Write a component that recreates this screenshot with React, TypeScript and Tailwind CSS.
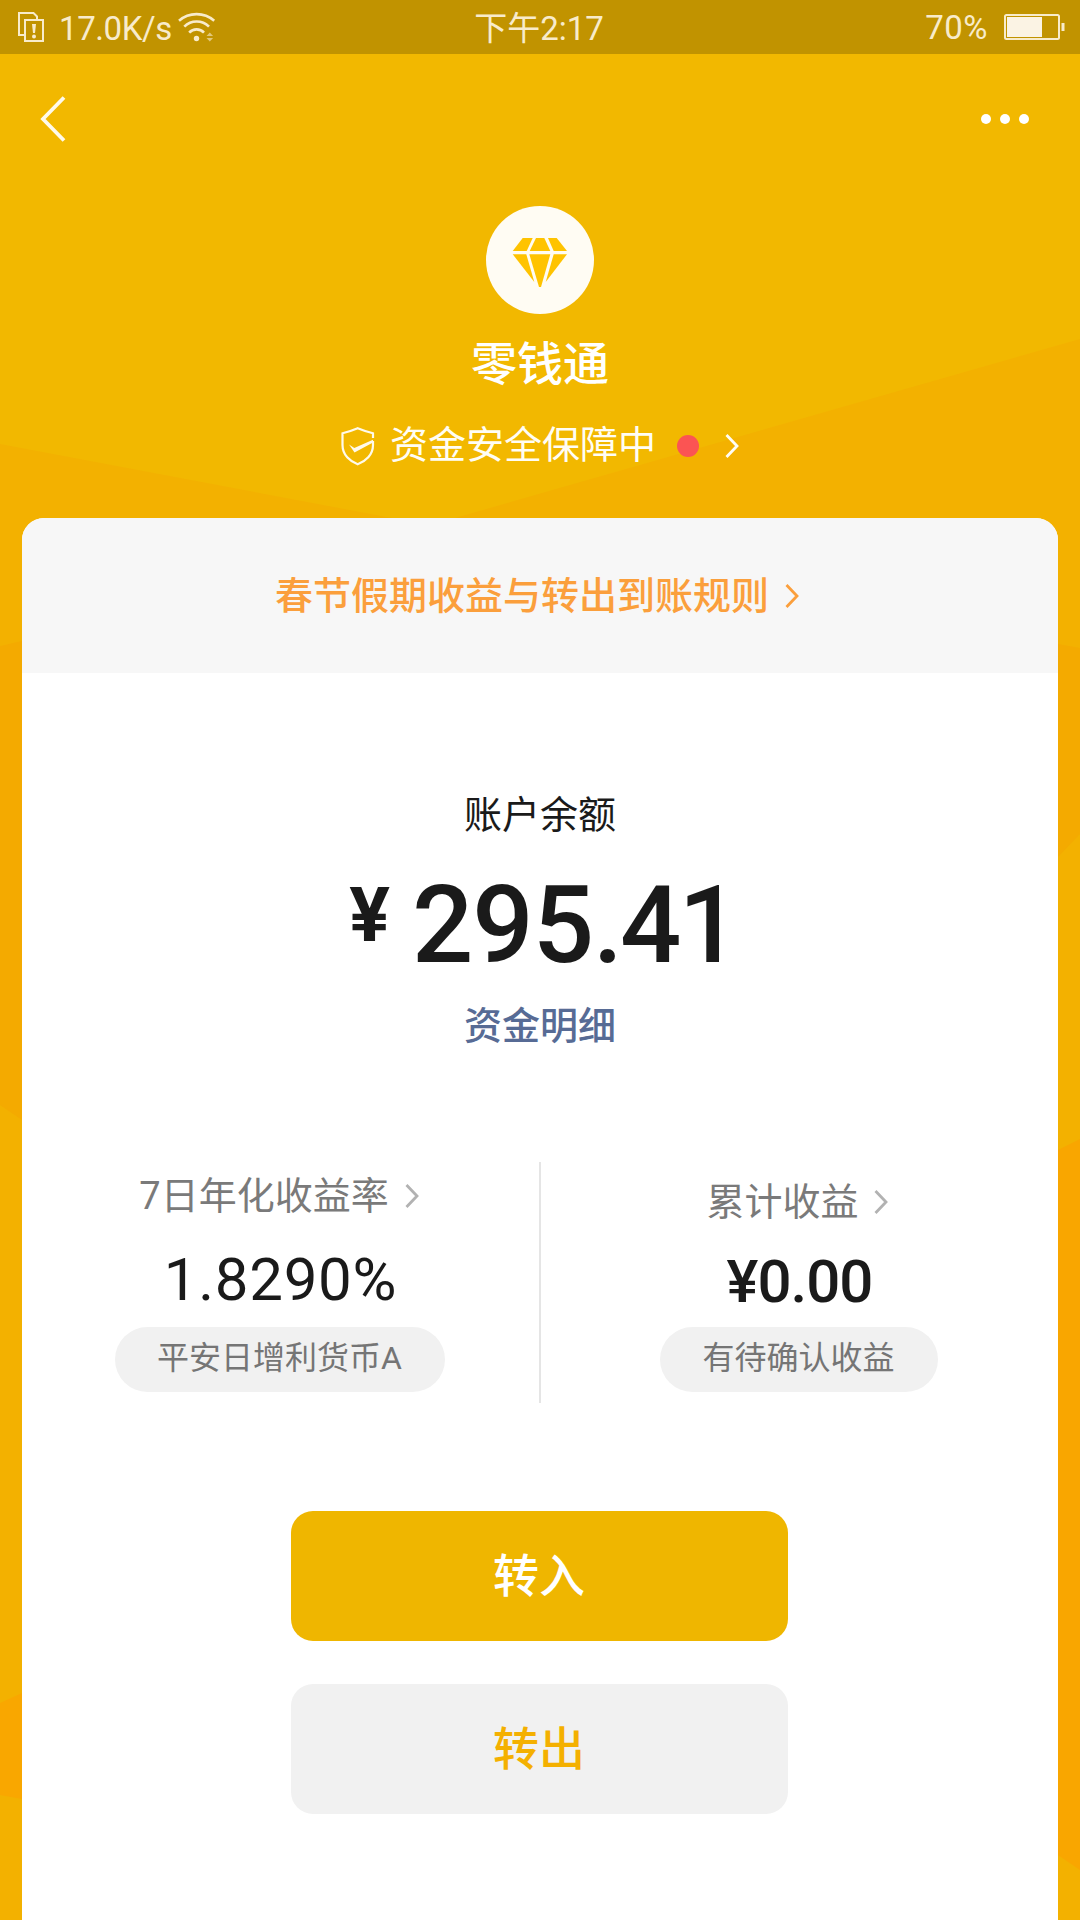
import clsx from "clsx"

/** Thin right-pointing arrow that follows every tappable label. */
function Chevron({ className }: { className?: string }) {
  return (
    <svg viewBox="0 0 14 24" fill="none" className={clsx("h-6 w-3.5 shrink-0", className)}>
      <path d="M1.5 1L12 12L1.5 23" stroke="currentColor" strokeWidth="2.8" />
    </svg>
  )
}

/** Low-contrast facets behind the card. */
function Backdrop() {
  return (
    <svg viewBox="0 0 1080 1920" className="absolute inset-0 h-full w-full">
      <rect width="1080" height="1920" fill="#f2b800" />
      <path d="M0 444L392 518H455L1080 339V1920H0Z" fill="#f3b100" />
      <path d="M0 646L22 641V1120L0 1105Z" fill="#f4aa00" />
      <path d="M0 1703L22 1693V1799L0 1795Z" fill="#f9a700" />
      <path d="M1058 644L1080 648V834L1058 857Z" fill="#f4aa00" />
      <path d="M1058 1150L1080 1139V1870L1058 1855Z" fill="#f9a600" />
    </svg>
  )
}

function StatusBar() {
  return (
    <div className="relative flex h-[54px] items-center bg-[#c19300] text-[33px] leading-[54px] text-[#f8ebcb]">
      <svg viewBox="0 0 27 31" fill="none" className="ml-[18px] h-[31px] w-[27px]">
        <path d="M6 23H1V1H15.5L19 4.5V8" stroke="currentColor" strokeWidth="2" />
        <rect x="7" y="8" width="18" height="21" stroke="currentColor" strokeWidth="2" />
        <path d="M14 12H18L17 21H15Z" fill="currentColor" />
        <circle cx="16" cy="24.5" r="2" fill="currentColor" />
      </svg>
      <span className="ml-3.5 w-[117px] pt-[3px] tracking-[-0.4px]">17.0K/s</span>
      <svg viewBox="0 0 40 34" fill="none" className="h-[34px] w-10">
        <g stroke="currentColor" strokeWidth="2.6">
          <path d="M3 10.8A26.6 26.6 0 0 1 38.2 10.8" />
          <path d="M8.3 16.6A17.5 17.5 0 0 1 33 16.6" />
          <path d="M13.2 22.6A10 10 0 0 1 28 22.6" />
        </g>
        <circle cx="20.5" cy="28.5" r="2.7" fill="currentColor" />
        <path d="M30.5 26L33.8 22.5L37.1 26ZM30.5 28L33.8 31.5L37.1 28Z" fill="currentColor" opacity="0.6" />
      </svg>
      <div className="absolute inset-x-0 top-0.5 pr-0.5 text-center">下午2:17</div>
      <span className="ml-auto mr-4 pt-px tracking-[0.5px]">70%</span>
      <svg viewBox="0 0 61 26" fill="none" className="mr-[15px] h-[26px] w-[61px]">
        <rect x="1" y="1" width="54" height="24" rx="1.5" stroke="currentColor" strokeWidth="2" />
        <rect x="3" y="3" width="35" height="20" fill="#fbf3e4" />
        <path d="M57.5 9H60.5V17H57.5Z" fill="currentColor" />
      </svg>
    </div>
  )
}

function NavBar() {
  return (
    <nav className="flex h-[130px] items-center justify-between pl-10 pr-[51px] text-white">
      <svg viewBox="0 0 26 46" fill="none" className="h-[46px] w-[26px]">
        <path d="M24 1.5L3 23L24 44.5" stroke="#fffaeb" strokeWidth="3.8" />
      </svg>
      <div className="flex gap-[9px]">
        <i className="size-2.5 rounded-full bg-white" />
        <i className="size-2.5 rounded-full bg-white" />
        <i className="size-2.5 rounded-full bg-white" />
      </div>
    </nav>
  )
}

function DiamondLogo() {
  return (
    <svg viewBox="0 0 108 108" className="mt-[22px] size-[108px]">
      <circle cx="54" cy="54" r="54" fill="#fffcf3" />
      <g fill="#ffc300">
        <path d="M36.7 32H46.7L40.7 45H26.7Z" />
        <path d="M50 32H58.3L64.3 45H43.7Z" />
        <path d="M62 32H70.7L81 45H67.7Z" />
        <path d="M26.7 48.3H40.3L48.3 76Z" />
        <path d="M43.3 48.3H64.3L55 81H53Z" />
        <path d="M67.7 48.3H81L59.7 76Z" />
      </g>
    </svg>
  )
}

function ShieldIcon() {
  return (
    <svg viewBox="0 0 34 39" fill="none" className="mt-0.5 h-[39px] w-[34px]">
      <path
        d="M32 11V6.3C26.5 5 21.5 3.3 16.7 1.3C12 3.3 7 5 1.5 6.3V18C1.5 28 9 34.5 16.7 37.3C24.5 34.5 32 28 32 18V14"
        stroke="#fffaeb"
        strokeWidth="2.2"
      />
      <path d="M8 17.5L13.3 21L32 12.8V15.6L13.5 25.5Z" fill="#fffaeb" />
    </svg>
  )
}

type StatProps = {
  label: string
  value: string
  tag: string
  className?: string
  labelClass?: string
  valueClass?: string
  tagClass?: string
}

function Stat({ label, value, tag, className, labelClass, valueClass, tagClass }: StatProps) {
  return (
    <div className={clsx("flex flex-1 flex-col items-center pb-[11px]", className)}>
      <div className={clsx("flex h-[50px] items-center text-[38px] leading-[50px] text-[#7a7a7a]", labelClass)}>
        {label}
        <Chevron className="text-[#b2b2b2]" />
      </div>
      <div className={clsx("text-6xl leading-[60px] text-[#1a1a1a]", valueClass)}>{value}</div>
      <div
        className={clsx(
          "mr-0.5 mt-auto h-[65px] rounded-full bg-[#f1f1f1] text-center text-[32px] leading-[62px] text-[#757575]",
          tagClass
        )}
      >
        {tag}
      </div>
    </div>
  )
}

export default function App() {
  return (
    <div className="relative h-[1920px] w-[1080px] overflow-hidden font-['Roboto','Noto_Sans_CJK_SC',sans-serif]">
      <Backdrop />
      <div className="relative flex h-full flex-col">
        <StatusBar />
        <NavBar />

        <header className="flex h-[334px] flex-col items-center text-white">
          <DiamondLogo />
          <h1 className="mt-5 text-[46px] font-medium leading-[60px]">零钱通</h1>
          <div className="mt-[26px] flex h-[50px] items-center text-[38px] leading-[50px] text-[#fffdf5]">
            <ShieldIcon />
            <span className="ml-[15px]">资金安全保障中</span>
            <i className="ml-[21px] mt-0.5 size-[22px] rounded-full bg-[#fb5453]" />
            <Chevron className="ml-[26px] mt-0.5" />
          </div>
        </header>

        <main className="mx-[22px] flex flex-1 flex-col items-center overflow-hidden rounded-t-[22px] bg-white">
          <div className="flex h-[155px] w-full items-center justify-center gap-4 bg-[#f7f7f7] pr-1.5 text-[38px] font-medium leading-[50px] text-[#fb9f3c]">
            春节假期收益与转出到账规则
            <Chevron />
          </div>

          <p className="mt-[117px] text-[38px] leading-[50px] text-[#1a1a1a]">账户余额</p>
          <div className="-mr-1.5 mt-[35px] flex h-[100px] gap-[22px] font-medium text-[#1a1a1a]">
            <span className="text-[76px] font-bold leading-[80px]">¥</span>
            <span className="text-[108px] leading-[100px] tracking-[-1px]">
              295<span className="tracking-[-3px]">.41</span>
            </span>
          </div>
          <p className="mt-[26px] text-[38px] font-medium leading-[50px] text-[#576b95]">资金明细</p>

          <section className="mt-[111px] flex h-[241px] w-full">
            <Stat
              label="7日年化收益率"
              value="1.8290%"
              tag="平安日增利货币A"
              className="pt-[9px]"
              labelClass="gap-4 pr-[3px]"
              valueClass="mt-[29px] tracking-[0.7px]"
              tagClass="w-[330px]"
            />
            <div className="w-0.5 bg-[#e5e5e5]" />
            <Stat
              label="累计收益"
              value="¥0.00"
              tag="有待确认收益"
              className="pt-[15px]"
              labelClass="gap-[15px] pr-[5px]"
              valueClass="mt-[25px] font-medium tracking-[-1px]"
              tagClass="w-[278px]"
            />
          </section>

          <div className="mr-0.5 mt-[108px] flex w-[497px] flex-col gap-[43px] text-[46px] font-medium">
            <button className="h-[130px] rounded-[22px] bg-[#efb600] text-white">转入</button>
            <button className="h-[130px] rounded-[22px] bg-[#f1f1f1] text-[#f4b000]">转出</button>
          </div>
        </main>
      </div>
    </div>
  )
}
